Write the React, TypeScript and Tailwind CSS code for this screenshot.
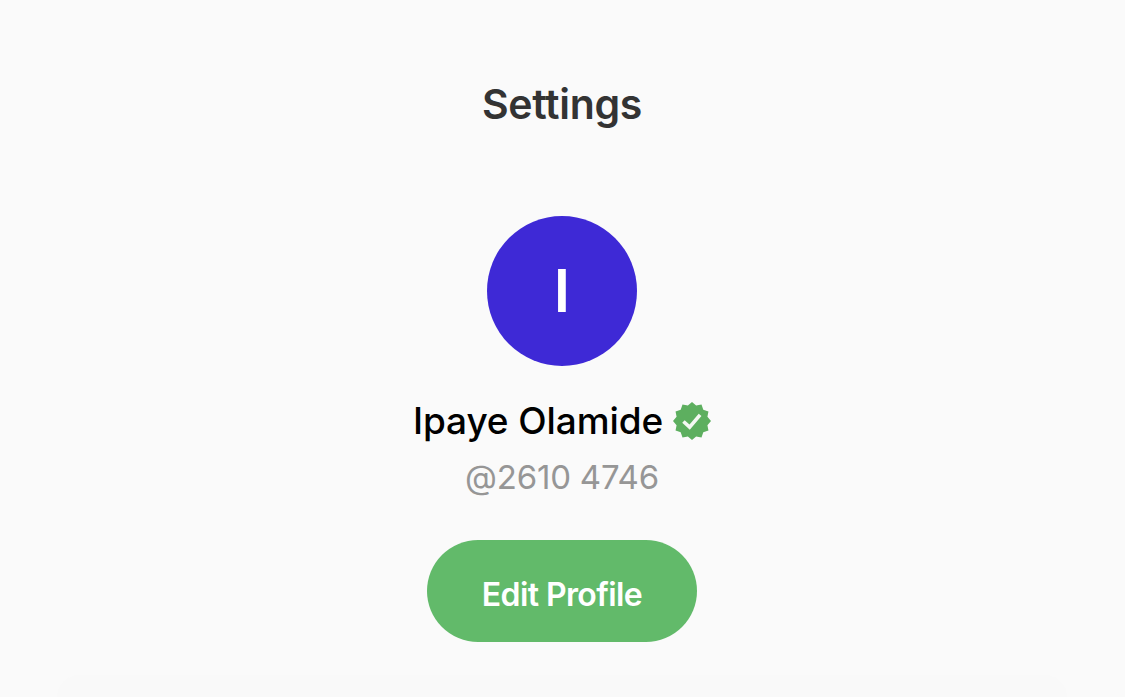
const FONT = "font-['Inter','Liberation_Sans',sans-serif]";

// 12 point seal: outer radius 20, inner 17
const SEAL_POINTS = Array.from({ length: 24 }, (_, i) => {
  const r = i % 2 === 0 ? 20 : 16.8;
  const a = (Math.PI * i) / 12 - Math.PI / 2;
  return `${(20 + r * Math.cos(a)).toFixed(2)},${(20 + r * Math.sin(a)).toFixed(2)}`;
}).join(" ");

const VerifiedBadge = () => (
  <svg viewBox="0 0 40 40" className="w-[38px] h-[38px] shrink-0">
    <polygon fill="#5DAF5F" points={SEAL_POINTS} />
    <path d="M11 20.5l6.5 6L28.5 13.5" fill="none" stroke="#F4F8F2" strokeWidth="3.8" />
  </svg>
);

export default function App() {
  return (
    <div className={`${FONT} h-[697px] w-full overflow-hidden bg-[#FAFAFA] pr-px flex flex-col items-center`}>
      <h1 className="mt-[80px] h-[48px] text-[41px] leading-[48px] font-semibold tracking-[-0.3px] text-[#333333]">
        Settings
      </h1>
      <div className="mt-[88px] w-[150px] h-[150px] rounded-full bg-[#3E29D6] flex items-center justify-center text-white text-[59px] font-semibold">
        I
      </div>
      <div className="mt-[33px] h-[44px] flex items-center gap-[10px]">
        <span className="text-[37px] leading-[44px] font-[550] tracking-[-0.1px] text-black">Ipaye Olamide</span>
        <VerifiedBadge />
      </div>
      <p className="mt-[16px] h-[36px] text-[33px] leading-[36px] tracking-[-0.2px] text-[#969696]">@2610 4746</p>
      <button className="mt-[45px] w-[270px] h-[102px] rounded-[51px] bg-[#62BA6A] pt-[8px] text-white text-[32px] font-semibold tracking-[-0.6px]">
        Edit Profile
      </button>
      <div className="mt-[33px] w-[1010px] flex-1 rounded-t-[24px] bg-[#F9F9F9]" />
    </div>
  );
}
